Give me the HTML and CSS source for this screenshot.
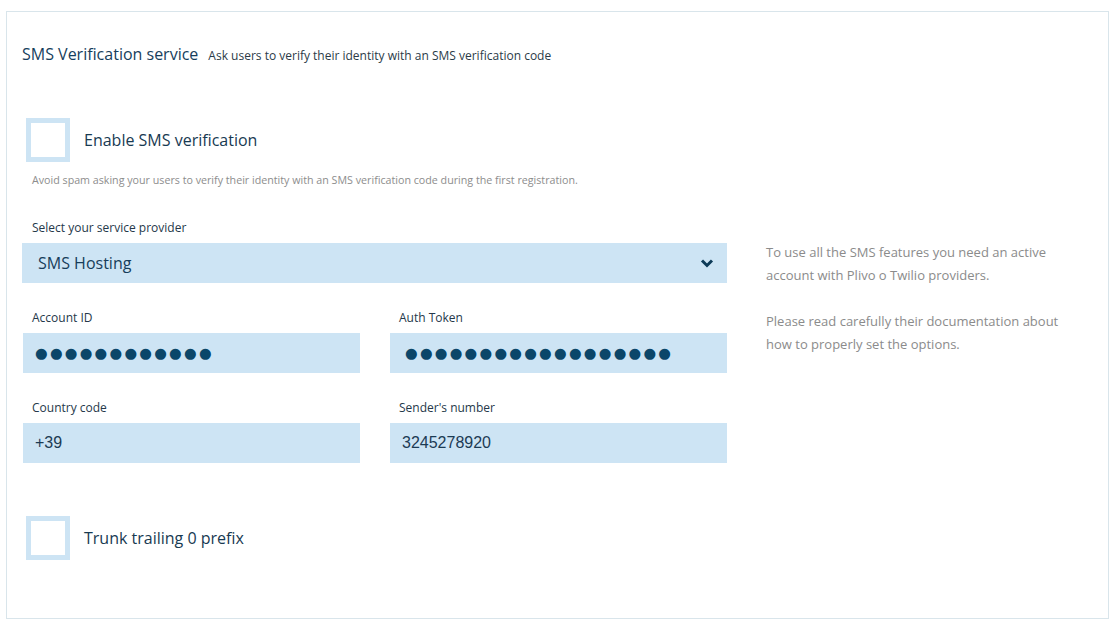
FILE: index.html
```html
<!DOCTYPE html>
<html>
<head>
<meta charset="utf-8">
<link rel="stylesheet" href="styles.css">
</head>
<body>
<div class="panel">
  <div class="header">
    <h1 class="title">SMS Verification service</h1>
    <span class="subtitle">Ask users to verify their identity with an SMS verification code</span>
  </div>

  <label class="check check-first">
    <span class="box"></span>
    <span class="check-label">Enable SMS verification</span>
  </label>
  <p class="help">Avoid spam asking your users to verify their identity with an SMS verification code during the first registration.</p>

  <div class="body">
    <div class="form">
      <div class="field full">
        <div class="label">Select your service provider</div>
        <div class="select">
          <span class="select-text">SMS Hosting</span>
          <svg class="chevron" width="14" height="10" viewBox="0 0 14 10"><path d="M2 2.5 L7 7.5 L12 2.5" fill="none" stroke="#0d3b58" stroke-width="3"/></svg>
        </div>
      </div>
      <div class="field">
        <div class="label">Account ID</div>
        <div class="input dots dots-a">●●●●●●●●●●●●</div>
      </div>
      <div class="field">
        <div class="label">Auth Token</div>
        <div class="input dots dots-b">●●●●●●●●●●●●●●●●●●</div>
      </div>
      <div class="field">
        <div class="label">Country code</div>
        <div class="input plain">+39</div>
      </div>
      <div class="field">
        <div class="label">Sender's number</div>
        <div class="input plain">3245278920</div>
      </div>
    </div>
    <div class="aside">
      <p>To use all the SMS features you need an active account with Plivo o Twilio providers.</p>
      <p>Please read carefully their documentation about how to properly set the options.</p>
    </div>
  </div>

  <label class="check check-last">
    <span class="box"></span>
    <span class="check-label">Trunk trailing 0 prefix</span>
  </label>
</div>
</body>
</html>
```

FILE: styles.css
```css
* { box-sizing: border-box; }
html, body { margin: 0; padding: 0; background: #ffffff; }
body {
  font-family: "Open Sans", "Noto Sans", sans-serif;
  color: #1d3a50;
  width: 1115px;
  height: 625px;
  padding: 11px 6px 0 6px;
}
.panel {
  border: 1px solid #d9e5eb;
  height: 608px;
  padding: 0 0 0 15px;
}
.header {
  display: flex;
  align-items: baseline;
  margin-top: 31px;
  height: 22px;
}
.title {
  font-size: 16px;
  font-weight: 400;
  color: #163e5c;
  margin: 0 10px 0 0;
}
.subtitle {
  font-size: 12px;
  color: #2b3b48;
}
.check {
  display: flex;
  align-items: center;
  gap: 14px;
}
.check-first { margin-top: 53px; margin-left: 4px; }
.box {
  width: 44px;
  height: 44px;
  border: 5px solid #cde4f4;
  background: #fff;
  display: block;
}
.check-label {
  font-size: 16px;
  color: #183a52;
}
.help {
  margin: 11px 0 0 10px;
  font-size: 10.7px;
  color: #8d8d8d;
}
.body {
  display: flex;
  margin-top: 33px;
}
.form {
  width: 705px;
  display: grid;
  grid-template-columns: 338px 338px;
  column-gap: 29px;
  row-gap: 27px;
}
.field.full { grid-column: 1 / 3; }
.label {
  font-size: 12px;
  color: #25384a;
  padding-left: 10px;
  height: 15px;
  line-height: 15px;
  margin-bottom: 8px;
}
.select {
  height: 40px;
  background: #cde4f4;
  display: flex;
  align-items: center;
  justify-content: space-between;
  padding: 0 13px 0 16px;
}
.select-text {
  font-size: 16px;
  color: #173d5a;
}
.input {
  height: 40px;
  background: #cde4f4;
  margin-left: 1px;
  display: flex;
  align-items: center;
  padding-left: 12px;
}
.plain {
  font-family: "Liberation Sans", Arial, sans-serif;
  font-size: 16px;
  color: #1c3b54;
}
.dots {
  font-family: "DejaVu Sans", sans-serif;
  font-size: 14.5px;
  letter-spacing: 2.25px;
  color: #0b4669;
}
.dots-b { padding-left: 15px; }
.aside {
  margin-left: 39px;
  width: 300px;
  padding-top: 21px;
}
.aside p {
  margin: 0 0 23px 0;
  font-size: 13px;
  line-height: 23px;
  color: #8b8b8b;
}
.check-last { margin-top: 53px; margin-left: 4px; }
```
